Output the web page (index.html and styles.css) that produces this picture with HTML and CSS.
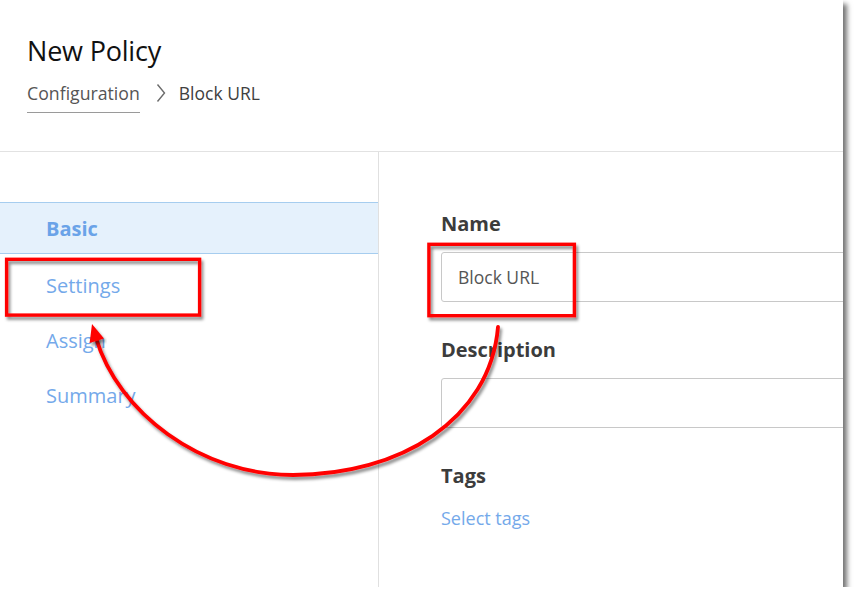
FILE: index.html
```html
<!DOCTYPE html>
<html lang="en">
<head>
    <meta charset="UTF-8">
    <title>New Policy</title>
    <link rel="stylesheet" href="styles.css">
</head>
<body>
    <div class="window">
        <div class="header">
            <h1 class="title">New Policy</h1>
            <div class="crumbs">
                <span class="crumb-link">Configuration</span>
                <svg class="chevron" width="10" height="20" viewBox="0 0 10 20">
                    <path d="M1.5 1.5 L8.5 10 L1.5 18.5" fill="none" stroke="#6b6b6b" stroke-width="1.4"/>
                </svg>
                <span class="crumb-current">Block URL</span>
            </div>
        </div>

        <div class="content">
            <div class="nav">
                <div class="nav-item active">Basic</div>
                <div class="nav-item">Settings</div>
                <div class="nav-item">Assign</div>
                <div class="nav-item">Summary</div>
            </div>

            <div class="main">
                <div class="field">
                    <div class="label">Name</div>
                    <div class="input">Block URL</div>
                </div>
                <div class="field">
                    <div class="label">Description</div>
                    <div class="input"></div>
                </div>
                <div class="field">
                    <div class="label">Tags</div>
                    <div class="link">Select tags</div>
                </div>
            </div>
        </div>

        <!-- callout drawn over the screenshot -->
        <svg class="callout" width="843" height="587" viewBox="0 0 843 587">
            <defs>
                <filter id="shade" x="-10%" y="-10%" width="130%" height="130%">
                    <feDropShadow dx="2" dy="3" stdDeviation="1.6" flood-color="#000" flood-opacity="0.45"/>
                </filter>
            </defs>
            <g filter="url(#shade)" fill="none" stroke="#ff0000" stroke-width="3.4">
                <rect x="6.6" y="259.3" width="193" height="55.8"/>
                <rect x="428.9" y="244.3" width="145.5" height="71.4"/>
                <path d="M498 327 C490 420, 400 475, 293 475 C200 475, 118 412, 96 338" stroke-width="3.8" stroke-linecap="round"/>
            </g>
            <polygon points="92,324 89.6,343 104,338.6" fill="#ff0000" filter="url(#shade)"/>
        </svg>
    </div>
</body>
</html>
```

FILE: styles.css
```css
body {
    margin: 0;
    background: #ffffff;
    font-family: "Open Sans", "Noto Sans", sans-serif;
}

.window {
    position: relative;
    width: 843px;
    height: 587px;
    background: #ffffff;
    box-shadow: 4px 4px 5px rgba(0, 0, 0, 0.55);
    overflow: hidden;
    display: flex;
    flex-direction: column;
}

.header {
    height: 152px;
    padding: 0 27px;
    border-bottom: 1px solid #e2e2e2;
    box-sizing: border-box;
    flex-shrink: 0;
}

.title {
    margin: 0;
    padding-top: 33px;
    font-size: 27px;
    font-weight: 400;
    line-height: 36px;
    color: #111111;
    letter-spacing: -0.2px;
}

.crumbs {
    display: flex;
    align-items: center;
    margin-top: 9px;
    height: 30px;
}

.crumb-link {
    font-size: 17.7px;
    color: #555555;
    line-height: 30px;
    border-bottom: 1px solid #9a9a9a;
    padding-bottom: 4px;
    margin-top: 5px;
}

.chevron {
    margin: 0 13px 0 16px;
}

.crumb-current {
    font-size: 17.5px;
    color: #404040;
    line-height: 30px;
}

.content {
    flex: 1;
    display: flex;
}

.nav {
    width: 378px;
    border-right: 1px solid #e0e0e0;
    padding-top: 50px;
    flex-shrink: 0;
}

.nav-item {
    height: 55px;
    line-height: 57px;
    padding-left: 46px;
    font-size: 20px;
    color: #74a9ea;
    box-sizing: border-box;
}

.nav-item.active {
    height: 52px;
    line-height: 51px;
    margin-bottom: 3px;
    background: #e5f1fc;
    border-top: 1px solid #a6cdef;
    border-bottom: 1px solid #a6cdef;
    font-weight: 700;
    color: #6aa3e8;
}

.main {
    flex: 1;
    padding: 58px 0 0 62px;
    overflow: hidden;
}

.field {
    margin-bottom: 34px;
}

.label {
    font-size: 20px;
    font-weight: 700;
    line-height: 28px;
    color: #3c3c3c;
    margin-bottom: 14px;
}

.input {
    width: 480px;
    height: 50px;
    border: 1px solid #c8c8c8;
    border-radius: 3px;
    box-sizing: border-box;
    padding-left: 16px;
    font-size: 17.5px;
    line-height: 48px;
    color: #555555;
}

.link {
    font-size: 18px;
    line-height: 28px;
    color: #74a9ea;
    margin-top: 3px;
}

.callout {
    position: absolute;
    left: 0;
    top: 0;
    pointer-events: none;
}
```
